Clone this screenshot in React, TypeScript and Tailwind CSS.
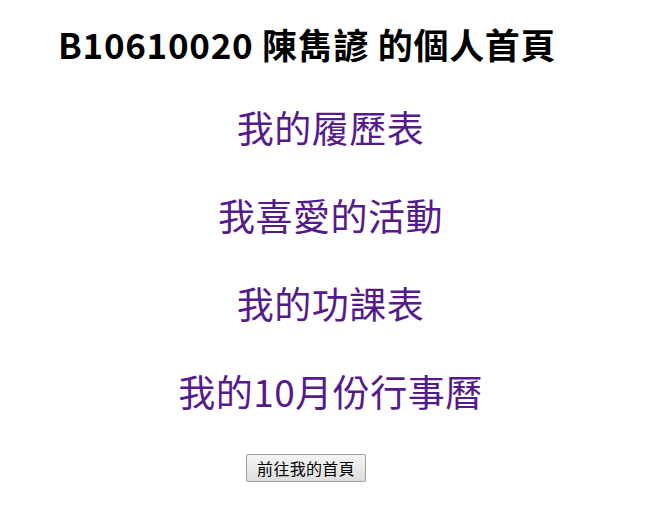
const links = ["我的履歷表", "我喜愛的活動", "我的功課表", "我的10月份行事曆"];

const App = () => {
  return (
    <div
      className="min-h-[510px] bg-white text-black"
      style={{ fontFamily: '"Noto Sans CJK TC", "Noto Sans", sans-serif' }}
    >
      <h1 className="pl-[58px] pt-[22px] text-[35px] font-bold leading-[44px] tracking-[0.7px]">
        B10610020 陳雋諺 的個人首頁
      </h1>
      <div className="mt-[39px] flex flex-col items-center pl-[10px]">
        {links.map((t) => (
          <a
            key={t}
            href="#"
            className="h-[88px] text-[37px] leading-[44px] tracking-[0.5px] text-[#551a8b]"
          >
            {t}
          </a>
        ))}
      </div>
      <div className="mt-[-3px] flex pl-[246px]">
        <button className="h-[28px] w-[120px] rounded-[2px] border border-[#a0a0a0] bg-gradient-to-b from-[#f4f4f4] to-[#dedede] text-[16px] leading-none tracking-[0.3px] text-black">
          前往我的首頁
        </button>
      </div>
    </div>
  );
};

export default App;
